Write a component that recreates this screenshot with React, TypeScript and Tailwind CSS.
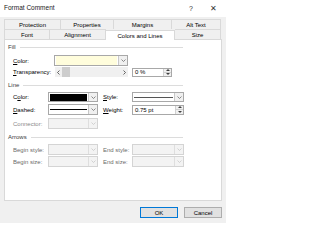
import React from 'react';

const Chevron = ({ disabled }: { disabled?: boolean }) => (
  <svg width="5" height="3" viewBox="0 0 5 3">
    <path d="M0.5 0.5 L2.5 2.5 L4.5 0.5" fill="none" stroke={disabled ? '#c8c8c8' : '#707070'} strokeWidth="0.8" />
  </svg>
);

const Arrow = ({ right }: { right?: boolean }) => (
  <svg width="3" height="5" viewBox="0 0 3 5">
    <path d={right ? 'M0.5 0.5 L2.5 2.5 L0.5 4.5' : 'M2.5 0.5 L0.5 2.5 L2.5 4.5'} fill="none" stroke="#404040" strokeWidth="0.8" />
  </svg>
);

const Spin = () => (
  <div className="flex w-[8px] flex-col border-l border-[#d0d0d0] bg-[#f0f0f0]">
    <div className="flex flex-1 items-center justify-center border-b border-[#d0d0d0]">
      <svg width="4" height="2" viewBox="0 0 4 2"><path d="M0 2 L2 0 L4 2 Z" fill="#404040" /></svg>
    </div>
    <div className="flex flex-1 items-center justify-center">
      <svg width="4" height="2" viewBox="0 0 4 2"><path d="M0 0 L2 2 L4 0 Z" fill="#404040" /></svg>
    </div>
  </div>
);

interface ComboProps {
  className: string;
  disabled?: boolean;
  children?: React.ReactNode;
}

const Combo: React.FC<ComboProps> = ({ className, disabled, children }) => (
  <div className={`flex h-full border ${disabled ? 'border-[#d4d4d4] bg-[#f3f3f3]' : 'border-[#a8a8a8] bg-white'} ${className}`}>
    <div className="flex flex-1 items-center px-[1px]">{children}</div>
    <div className={`flex w-[9px] items-center justify-center border-l ${disabled ? 'border-[#dedede]' : 'border-[#c8c8c8] bg-[#f0f0f0]'}`}>
      <Chevron disabled={disabled} />
    </div>
  </div>
);

const Section = ({ label, className }: { label: string; className: string }) => (
  <div className={`flex h-[10px] items-center pl-[3px] pr-[38px] ${className}`}>
    <span className="text-[#3c3c3c]">{label}</span>
    <div className="ml-[4px] h-px flex-1 bg-[#dcdcdc]" />
  </div>
);

const Tab = ({ label, className }: { label: string; className: string }) => (
  <div className={`flex h-full items-center justify-center border-r border-t border-[#d9d9d9] ${className}`}>{label}</div>
);

export default function App() {
  return (
    <div className="flex h-[223px] w-[226px] flex-col overflow-hidden bg-[#f0f0f0] font-['Liberation_Sans',Arial,sans-serif] text-[6px] leading-none text-black">
      <div className="flex h-[17px] items-center bg-white pl-[4px] pr-[8px]">
        <span className="text-[6.5px] text-[#1a1a1a]">Format Comment</span>
        <span className="ml-auto w-[10px] text-center text-[7px] text-[#333]">?</span>
        <span className="ml-[12px] w-[10px] text-center text-[8px] font-light text-[#333]">✕</span>
      </div>

      <div className="mt-[2px] flex h-[10px] px-[4px]">
        <Tab label="Protection" className="w-[57px] border-l" />
        <Tab label="Properties" className="w-[53px]" />
        <Tab label="Margins" className="w-[58px]" />
        <Tab label="Alt Text" className="w-[49px]" />
      </div>
      <div className="flex h-[10px] px-[4px]">
        <Tab label="Font" className="w-[46px] border-l" />
        <Tab label="Alignment" className="w-[56px]" />
        <div className="relative z-10 mt-[1px] -mb-px flex h-[10px] w-[69px] items-center justify-center border-r border-t border-[#d9d9d9] bg-white">
          Colors and Lines
        </div>
        <Tab label="Size" className="w-[46px]" />
      </div>

      <div className="mx-[4px] flex h-[162px] flex-col border border-[#d9d9d9] bg-white">
        <Section label="Fill" className="mt-[2px]" />
        <div className="mt-[3px] flex h-[11px] items-center pl-[8px]">
          <span className="w-[41px]"><span className="underline">C</span>olor:</span>
          <Combo className="w-[74px] bg-[#fffddc]">
            <div className="h-full w-full bg-[#fffddc]" />
          </Combo>
        </div>
        <div className="mt-[1px] flex h-[10px] items-center pl-[8px]">
          <span className="w-[42px]"><span className="underline">T</span>ransparency:</span>
          <div className="flex h-full w-[73px] items-center bg-[#f0f0f0]">
            <span className="flex w-[7px] justify-center"><Arrow /></span>
            <div className="h-full w-[8px] bg-[#cdcdcd]" />
            <span className="ml-auto flex w-[7px] justify-center"><Arrow right /></span>
          </div>
          <div className="ml-[4px] flex h-[9px] w-[40px] border border-[#a8a8a8] bg-white">
            <span className="flex flex-1 items-center pl-[2px]">0 %</span>
            <Spin />
          </div>
        </div>

        <Section label="Line" className="mt-[3px]" />
        <div className="mt-[2px] flex h-[10px] items-center pl-[8px]">
          <span className="w-[35px]">C<span className="underline">o</span>lor:</span>
          <Combo className="w-[50px]">
            <div className="h-[7px] w-full bg-black" />
          </Combo>
          <span className="ml-[5px] w-[29px]"><span className="underline">S</span>tyle:</span>
          <Combo className="w-[52px]">
            <div className="h-px w-full bg-[#555]" />
          </Combo>
        </div>
        <div className="mt-[2px] flex h-[11px] items-center pl-[8px]">
          <span className="w-[35px]"><span className="underline">D</span>ashed:</span>
          <Combo className="w-[50px]">
            <div className="h-[1.5px] w-full bg-black" />
          </Combo>
          <span className="ml-[5px] w-[29px]"><span className="underline">W</span>eight:</span>
          <div className="flex h-[10px] w-[52px] border border-[#a8a8a8] bg-white">
            <span className="flex flex-1 items-center pl-[2px]">0.75 pt</span>
            <Spin />
          </div>
        </div>
        <div className="mt-[3px] flex h-[11px] items-center pl-[8px]">
          <span className="w-[35px] text-[#8a8a8a]">Connector:</span>
          <Combo className="w-[50px]" disabled />
        </div>

        <Section label="Arrows" className="mt-[3px]" />
        <div className="mt-[2px] flex h-[11px] items-center pl-[8px]">
          <span className="w-[35px] text-[#6a6a6a]">Begin style:</span>
          <Combo className="w-[50px]" disabled />
          <span className="ml-[5px] w-[29px] text-[#6a6a6a]">End style:</span>
          <Combo className="w-[52px]" disabled />
        </div>
        <div className="mt-[1px] flex h-[11px] items-center pl-[8px]">
          <span className="w-[35px] text-[#6a6a6a]">Begin size:</span>
          <Combo className="w-[50px]" disabled />
          <span className="ml-[5px] w-[29px] text-[#6a6a6a]">End size:</span>
          <Combo className="w-[52px]" disabled />
        </div>
      </div>

      <div className="mt-[6px] flex h-[11px] justify-end gap-[6px] pr-[4px]">
        <button className="flex w-[38px] items-center justify-center border border-[#0078d7] bg-[#e1e1e1] text-[6px]">OK</button>
        <button className="flex w-[38px] items-center justify-center border border-[#adadad] bg-[#e1e1e1] text-[6px]">Cancel</button>
      </div>
    </div>
  );
}
